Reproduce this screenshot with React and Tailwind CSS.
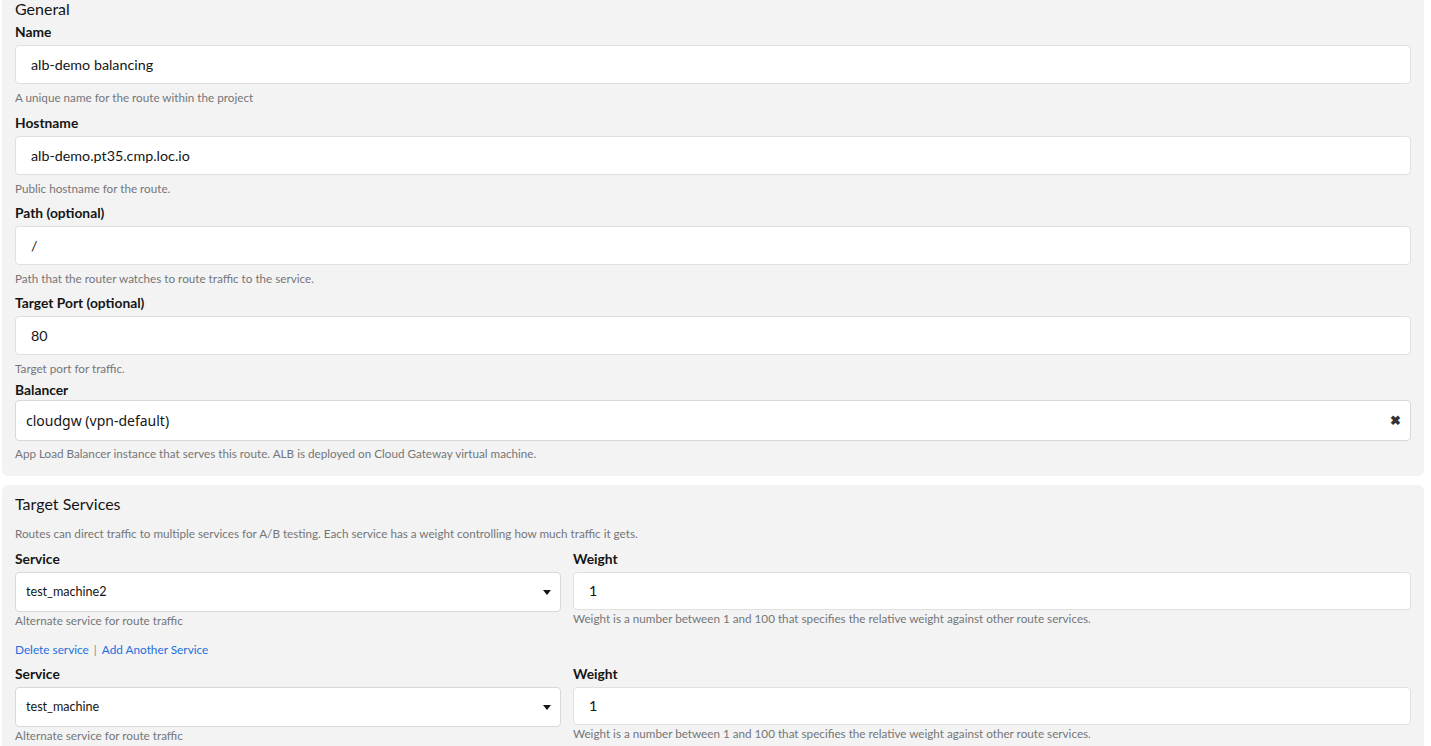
import React from "react";

const labelCls = "block text-[13.8px] leading-5 font-bold text-[#151515]";
const helpCls = "text-[11.7px] leading-4 text-[#737679]";

function TextField({ label, value, help, className = "mb-[7px]" }) {
  return (
    <div className={className}>
      <label className={labelCls + " mb-[3px]"}>{label}</label>
      <div className="h-[39px] bg-white border border-[#e0e0e0] rounded-[4px] flex items-center px-[15px] text-[14.3px] text-[#151515]">
        {value}
      </div>
      <p className={helpCls + " mt-[5px]"}>{help}</p>
    </div>
  );
}

function Caret() {
  return (
    <svg width="8" height="5" viewBox="0 0 8 5" className="shrink-0">
      <path d="M0 0h8L4 5z" fill="#151515" />
    </svg>
  );
}

function ServiceRow({ service }) {
  return (
    <div className="flex gap-3">
      <div className="w-[546px] shrink-0">
        <label className={labelCls + " mb-[3px]"}>Service</label>
        <div className="h-[40px] bg-white border border-[#d8d8d8] rounded-[4px] flex items-center justify-between pl-[10px] pr-[9px] text-[12.6px] text-[#151515]">
          <span>{service}</span>
          <Caret />
        </div>
        <p className={helpCls}>Alternate service for route traffic</p>
      </div>
      <div className="flex-1">
        <label className={labelCls + " mb-[3px]"}>Weight</label>
        <div className="h-[38px] bg-white border border-[#e0e0e0] rounded-[4px] flex items-center px-[15px] text-[14.3px] text-[#151515]">
          1
        </div>
        <p className={helpCls}>
          Weight is a number between 1 and 100 that specifies the relative weight against other route services.
        </p>
      </div>
    </div>
  );
}

export default function App() {
  return (
    <div className="min-h-screen bg-white font-['Lato',sans-serif] pl-[2px] pr-[7px]">
      <div className="bg-[#f3f3f3] rounded-b-[6px] px-[13px] pb-[15px]">
        <h2 className="text-[16px] leading-[17px] text-[#151515] mb-[5px]">General</h2>
        <TextField
          label="Name"
          value="alb-demo balancing"
          help="A unique name for the route within the project"
          className="mb-2"
        />
        <TextField
          label="Hostname"
          value="alb-demo.pt35.cmp.loc.io"
          help="Public hostname for the route."
        />
        <TextField
          label="Path (optional)"
          value="/"
          help="Path that the router watches to route traffic to the service."
        />
        <TextField
          label="Target Port (optional)"
          value="80"
          help="Target port for traffic."
          className="mb-1"
        />
        <label className={labelCls}>Balancer</label>
        <div className="h-[41px] bg-white border border-[#d8d8d8] rounded-[4px] flex items-center justify-between pl-[10px] pr-[9px] text-[14px] text-[#151515] font-['Noto_Sans',sans-serif]">
          <span>cloudgw (vpn-default)</span>
          <span className="text-[13px] font-bold text-[#333]">✖</span>
        </div>
        <p className={helpCls + " mt-1"}>
          App Load Balancer instance that serves this route. ALB is deployed on Cloud Gateway virtual machine.
        </p>
      </div>

      <div className="bg-[#f3f3f3] rounded-t-[6px] mt-[9px] px-[13px] pt-[9px] pb-4">
        <h2 className="text-[16px] leading-5 text-[#151515]">Target Services</h2>
        <p className={helpCls + " mt-[11px] mb-2"}>
          Routes can direct traffic to multiple services for A/B testing. Each service has a weight controlling how much traffic it gets.
        </p>
        <ServiceRow service="test_machine2" />
        <div className="mt-[14px] mb-[6px] text-[11.8px] leading-4 flex items-center gap-[5px]">
          <a className="text-[#1a6fe0]">Delete service</a>
          <span className="text-[#8a8d90]">|</span>
          <a className="text-[#1a6fe0]">Add Another Service</a>
        </div>
        <ServiceRow service="test_machine" />
      </div>
    </div>
  );
}
